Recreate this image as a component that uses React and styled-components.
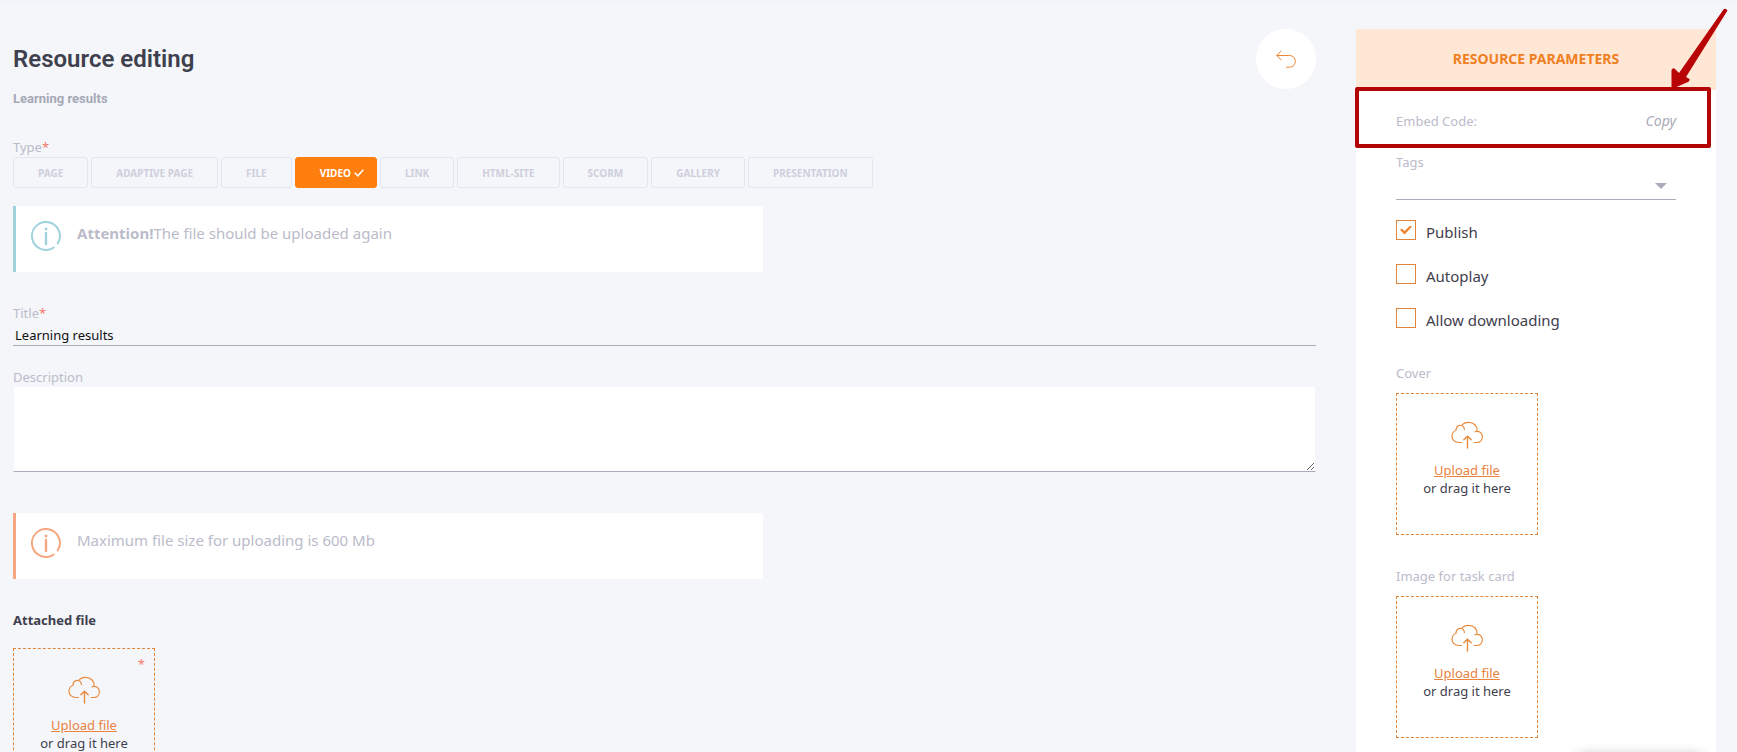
import React, { useState } from "react";
import styled, { createGlobalStyle } from "styled-components";

const Global = createGlobalStyle`
  *, *::before, *::after { box-sizing: border-box; }
  body {
    margin: 0;
    background: #f4f6fa;
    color: #3f404d;
    font-family: "Noto Sans", "Segoe UI", sans-serif;
    font-size: 13px;
    line-height: 18px;
  }
  button, input, textarea, select { font: inherit; color: inherit; }
`;

const Page = styled.div`
  display: flex;
  align-items: flex-start;
  gap: 40px;
  padding: 25px 21px 0 13px;
  border-top: 4px solid #f1f4f8;
`;

const Main = styled.main`
  flex: 1;
  min-width: 0;
  padding-bottom: 40px;
`;

const PageHeader = styled.header`
  display: flex;
  justify-content: space-between;
  align-items: flex-start;
`;

const Heading = styled.h1`
  margin: 16px 0 0;
  font: 600 24px/28px Roboto, sans-serif;
`;

const SubHeading = styled.p`
  margin: 18px 0 0;
  font: 700 13px/16px Roboto, sans-serif;
  color: #a7a9b7;
`;

const BackButton = styled.button`
  display: grid;
  place-items: center;
  width: 60px;
  height: 60px;
  padding: 0;
  border: 0;
  border-radius: 50%;
  background: #fff;
  color: #ef8432;
  cursor: pointer;
`;

const Caption = styled.span`
  display: block;
  color: #bbbbca;
`;

const Required = styled.span`
  color: #f5796b;
`;

const TypeGroup = styled.div`
  margin-top: 31px;
`;

const TypeList = styled.div`
  display: flex;
  flex-wrap: wrap;
  gap: 3px;
  margin-top: 1px;
`;

const TypeButton = styled.button`
  display: flex;
  align-items: center;
  gap: 3px;
  height: 31px;
  padding: 0 ${(p) => (p.$active ? 12 : 24)}px 0 24px;
  border: 1px solid ${(p) => (p.$active ? "#ff7f0e" : "#e4e5ef")};
  border-radius: 3px;
  background: ${(p) => (p.$active ? "#ff7f0e" : "transparent")};
  color: ${(p) => (p.$active ? "#fff" : "#cfcfdc")};
  font-size: 10px;
  font-weight: 700;
  text-transform: uppercase;
  cursor: pointer;
`;

const NoticeBox = styled.div`
  display: flex;
  gap: 15px;
  max-width: 750px;
  height: 66px;
  margin-top: ${(p) => p.$gap}px;
  padding: 15px;
  border-left: 3px solid ${(p) => p.$color};
  background: #fff;
  color: ${(p) => p.$color};
`;

const NoticeText = styled.p`
  margin: 0;
  padding-top: 1px;
  font-size: 15px;
  line-height: 22px;
  color: #bbbbca;
`;

const Field = styled.label`
  display: block;
  margin-top: ${(p) => p.$gap}px;
`;

const TextInput = styled.input`
  display: block;
  width: 100%;
  height: 24px;
  padding: 2px 2px 0;
  border: 0;
  border-bottom: 1px solid #a9abb9;
  background: transparent;
  color: #111;
`;

const TextArea = styled.textarea`
  display: block;
  width: 100%;
  height: 86px;
  padding: 2px;
  border: 1px solid #f4f6fa;
  border-bottom-color: #a9abb9;
  background: #fff;
  resize: vertical;
`;

const SectionTitle = styled.h2`
  margin: 32px 0 19px;
  font-size: 13px;
  line-height: 18px;
  font-weight: 700;
`;

const DropBox = styled.div`
  position: relative;
  display: flex;
  flex-direction: column;
  align-items: center;
  width: 142px;
  height: 142px;
  padding-top: 27px;
  border: 1px dashed #e0863a;
`;

const DropLink = styled.a`
  margin-top: 12px;
  color: #ea8240;
  text-decoration: underline;
`;

const DropMark = styled(Required)`
  position: absolute;
  top: 6px;
  right: 9px;
`;

const Aside = styled.aside`
  flex: none;
  width: 360px;
  padding-bottom: 40px;
  background: #fff;
`;

const AsideTitle = styled.h2`
  margin: 0;
  padding: 20px 0 21px;
  background: #ffe7d6;
  color: #ef7f22;
  font-size: 14px;
  line-height: 20px;
  font-weight: 700;
  text-align: center;
`;

const EmbedRow = styled.div`
  position: relative;
  display: flex;
  justify-content: space-between;
  align-items: center;
  height: 58px;
  padding: 4px 40px 0;

  &::after {
    content: "";
    position: absolute;
    inset: -3px 5px 0 -1px;
    border: 4px solid #b30505;
    border-radius: 2px;
    pointer-events: none;
  }
`;

const CopyButton = styled.button`
  padding: 0;
  border: 0;
  background: none;
  color: #a9abb9;
  font-size: 14px;
  font-style: italic;
  cursor: pointer;
`;

const Pointer = styled.svg`
  position: absolute;
  right: -13px;
  bottom: 58px;
  pointer-events: none;
`;

const AsideBody = styled.div`
  padding: 5px 40px 0;
`;

const SelectWrap = styled.span`
  display: flex;
  align-items: center;
  height: 29px;
  border-bottom: 1px solid #a9abb9;
`;

const Select = styled.select`
  flex: 1;
  height: 28px;
  margin-right: -21px;
  border: 0;
  background: transparent;
  appearance: none;
`;

const Caret = styled.span`
  margin: 2px 9px 0 0;
  border: 6px solid transparent;
  border-top-color: #a9abb9;
  border-bottom: 0;
  pointer-events: none;
`;

const Checks = styled.div`
  display: grid;
  gap: 20px;
  margin: 20px 0 32px;
`;

const CheckLabel = styled.label`
  display: flex;
  gap: 10px;
  height: 24px;
  font-size: 15px;
  line-height: 24px;
`;

const Checkbox = styled.input`
  appearance: none;
  flex: none;
  width: 20px;
  height: 20px;
  margin: 0;
  border: 1px solid #e0863a;
  background: #fff;

  &:checked {
    display: grid;
    place-items: center;
  }
  &:checked::before {
    content: "";
    width: 12px;
    height: 9px;
    background: #ef8432;
    clip-path: polygon(0 50%, 15% 33%, 38% 62%, 85% 0, 100% 15%, 38% 100%);
  }
`;

const Upload = styled.section`
  margin-top: ${(p) => p.$gap}px;

  ${DropBox} { margin-top: 11px; }
`;

const ChatTab = styled.div`
  position: fixed;
  right: 33px;
  bottom: -42px;
  width: 128px;
  height: 40px;
  border-radius: 8px 8px 0 0;
  background: #fff;
  box-shadow: 0 0 12px rgba(0, 0, 0, 0.22);
`;

const CloudIcon = () => (
  <svg width="32" height="28" viewBox="0 0 32 28" fill="none" stroke="#ea8a3c" strokeLinecap="round">
    <path d="M10.500 21.500H8C3.500 21.500 1 18.500 1 15.500 1 12.500 3 9.800 5 9.200 4.800 6.500 7 4.200 9.800 4.500 11.800 4.700 13.200 6.200 13.400 8.500M10.500 4.500C12.500 2 15 1.200 18 1.300 22.500 1.300 26.500 5 26 10M24 10.800C28 9.500 31.300 12 31.400 15.500 31.300 19 29 21.500 26 21.500H23.200" strokeWidth="1.200" />
    <path d="M16.500 27V16M12.800 18.800L16.500 15.200 20.200 18.800" strokeWidth="1.400" />
  </svg>
);

const InfoIcon = () => (
  <svg width="31" height="30" viewBox="0 0 31 30" fill="none" stroke="currentColor" strokeWidth="2" strokeLinecap="round">
    <path d="M26.700 22.500A14 14 0 1 0 22.800 26.500" />
    <path d="M15 12V23" strokeWidth="2.400" />
    <circle cx="15" cy="8" r="1.400" fill="currentColor" stroke="none" />
  </svg>
);

const BackIcon = () => (
  <svg width="20" height="18" viewBox="0 0 20 18" fill="none" stroke="currentColor" strokeLinecap="round">
    <path d="M5 1L.8 5.500 5 9.800M1 5.500H13.500C17 5.500 19.300 8 19.300 11.300S17 17.200 13.500 17.200H10.500" />
  </svg>
);

const TickIcon = () => (
  <svg width="10" height="8" viewBox="0 0 10 8" fill="none" stroke="currentColor" strokeWidth="1.500">
    <path d="M.8 3.800L3.800 6.800 9.300 .8" />
  </svg>
);

const TYPES = ["Page", "Adaptive page", "File", "Video", "Link", "HTML-site", "SCORM", "Gallery", "Presentation"];

function Notice({ color, gap, children }) {
  return (
    <NoticeBox $color={color} $gap={gap}>
      <InfoIcon />
      <NoticeText>{children}</NoticeText>
    </NoticeBox>
  );
}

function UploadBox({ required }) {
  return (
    <DropBox>
      {required && <DropMark>*</DropMark>}
      <CloudIcon />
      <DropLink href="#upload">Upload file</DropLink>
      <span>or drag it here</span>
    </DropBox>
  );
}

function Check({ label, checked }) {
  return (
    <CheckLabel>
      <Checkbox type="checkbox" defaultChecked={checked} />
      {label}
    </CheckLabel>
  );
}

export default function App() {
  const [type, setType] = useState("Video");
  return (
    <>
      <Global />
      <Page>
        <Main>
          <PageHeader>
            <div>
              <Heading>Resource editing</Heading>
              <SubHeading>Learning results</SubHeading>
            </div>
            <BackButton type="button" aria-label="Back">
              <BackIcon />
            </BackButton>
          </PageHeader>

          <TypeGroup role="group" aria-label="Type">
            <Caption>
              Type<Required>*</Required>
            </Caption>
            <TypeList>
              {TYPES.map((t) => (
                <TypeButton key={t} type="button" $active={t === type} aria-pressed={t === type} onClick={() => setType(t)}>
                  {t}
                  {t === type && <TickIcon />}
                </TypeButton>
              ))}
            </TypeList>
          </TypeGroup>

          <Notice color="#9fd2dc" gap={18}>
            <b>Attention!</b>The file should be uploaded again
          </Notice>

          <Field $gap={32}>
            <Caption>
              Title<Required>*</Required>
            </Caption>
            <TextInput defaultValue="Learning results" />
          </Field>
          <Field $gap={22}>
            <Caption>Description</Caption>
            <TextArea />
          </Field>

          <Notice color="#f6a781" gap={41}>
            Maximum file size for uploading is 600 Mb
          </Notice>

          <SectionTitle>Attached file</SectionTitle>
          <UploadBox required />
        </Main>

        <Aside>
          <AsideTitle>RESOURCE PARAMETERS</AsideTitle>
          <EmbedRow>
            <Caption>Embed Code:</Caption>
            <CopyButton type="button">Copy</CopyButton>
            <Pointer width="60" height="82" viewBox="0 0 60 82">
              <path d="M54.500 1.500Q56.500 -.5 58.500 2.500L17 69 20.500 71Q21 73 19 74L4 80.500Q2 80.500 2.500 78V62Q4 59 6 61L10 65Z" fill="#b80404" />
            </Pointer>
          </EmbedRow>
          <AsideBody>
            <Field $gap={0}>
              <Caption>Tags</Caption>
              <SelectWrap>
                <Select defaultValue="">
                  <option value="" aria-label="No tag" />
                </Select>
                <Caret />
              </SelectWrap>
            </Field>
            <Checks>
              <Check label="Publish" checked />
              <Check label="Autoplay" />
              <Check label="Allow downloading" />
            </Checks>
            <Upload $gap={0}>
              <Caption>Cover</Caption>
              <UploadBox />
            </Upload>
            <Upload $gap={32}>
              <Caption>Image for task card</Caption>
              <UploadBox />
            </Upload>
          </AsideBody>
        </Aside>
      </Page>
      <ChatTab aria-hidden="true" />
    </>
  );
}
